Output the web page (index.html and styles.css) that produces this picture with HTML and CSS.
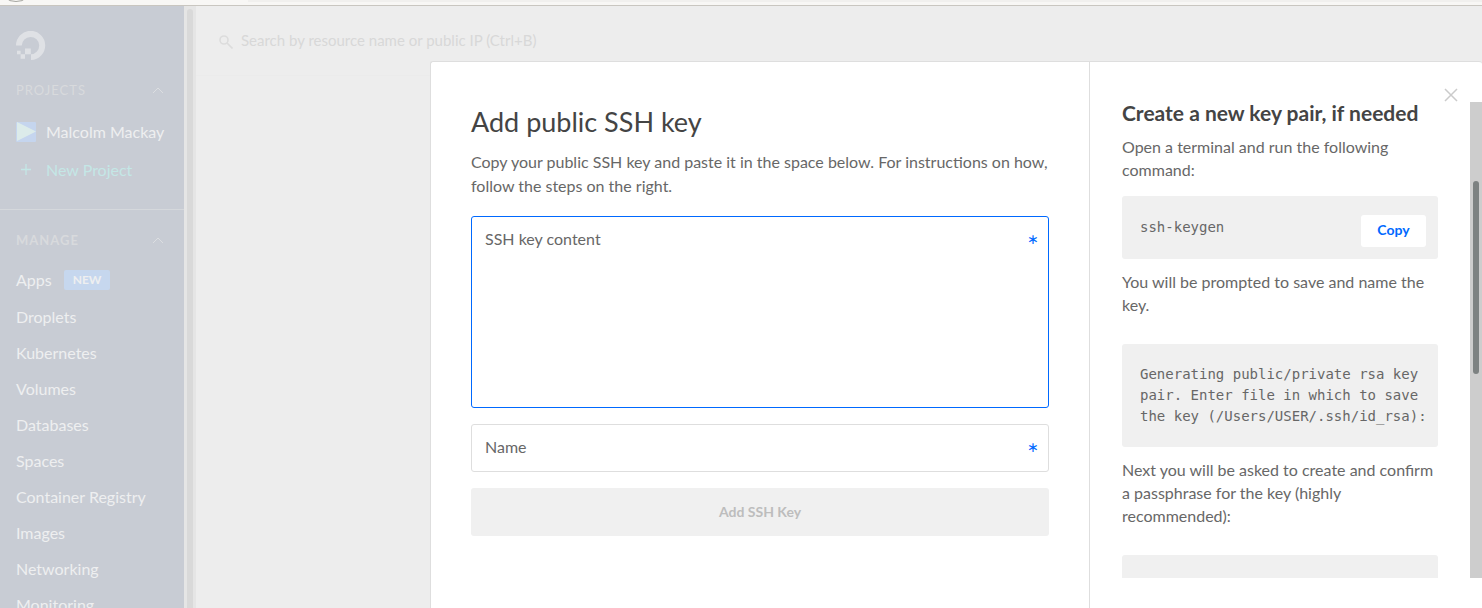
FILE: index.html
```html
<!DOCTYPE html>
<html lang="en">
<head>
<meta charset="utf-8">
<title>Add public SSH key</title>
<link rel="stylesheet" href="styles.css">
</head>
<body>
<div class="chrome"><svg class="chrome-icon" viewBox="0 0 24 5" aria-hidden="true"><path d="M6 -2Q9 1.500 16 1.500T26 -2" fill="none" stroke="#a5a5a0"/></svg><span class="chrome-field"></span></div>
<div class="app">
  <nav class="sidebar">
    <svg class="logo" viewBox="0 0 30 30" aria-hidden="true"><path d="M15 29v-5.700A8.700 8.700 0 1 0 5.800 14.500H0A14.600 14.600 0 1 1 15 29z"/><path d="M9 17.600h5.800v5.700H9zM4.600 23.300H9v4.400H4.600zM1 19.700h3.600v3.600H1z"/></svg>
    <div class="group"><h2>PROJECTS</h2><svg class="chevron" viewBox="0 0 12 8"><path d="M1 7l5-5 5 5"/></svg></div>
    <ul class="projects">
      <li><a href="#"><svg class="tile" viewBox="0 0 20 20"><rect width="20" height="20" rx="1" fill="#c5d5ee"/><path d="M1 0v19l19-9.500z" fill="#dcebea"/></svg>Malcolm Mackay</a></li>
      <li><a class="new" href="#"><svg class="tile" viewBox="0 0 20 20"><path d="M5 9.500h10M10 4v11" stroke="#c4e7e6" stroke-width="1.300"/></svg>New Project</a></li>
    </ul>
    <div class="group manage"><h2>MANAGE</h2><svg class="chevron" viewBox="0 0 12 8"><path d="M1 7l5-5 5 5"/></svg></div>
    <ul class="links">
      <li><a href="#">Apps<span class="badge">NEW</span></a></li>
      <li><a href="#">Droplets</a></li>
      <li><a href="#">Kubernetes</a></li>
      <li><a href="#">Volumes</a></li>
      <li><a href="#">Databases</a></li>
      <li><a href="#">Spaces</a></li>
      <li><a href="#">Container Registry</a></li>
      <li><a href="#">Images</a></li>
      <li><a href="#">Networking</a></li>
      <li><a href="#">Monitoring</a></li>
    </ul>
  </nav>
  <div class="side-track"><div class="side-thumb"></div></div>
  <div class="page">
    <header class="search">
      <svg class="search-icon" viewBox="0 0 14 14"><circle cx="5" cy="5" r="4"/><path d="M8 8l5.500 5.500"/></svg>
      <input type="search" aria-label="Search" placeholder="Search by resource name or public IP (Ctrl+B)">
    </header>
  </div>
  <div class="modal" role="dialog" aria-labelledby="title">
    <form class="form">
      <h1 id="title">Add public SSH key</h1>
      <p>Copy your public SSH key and paste it in the space below. For instructions on how, follow the steps on the right.</p>
      <div class="field">
        <textarea class="active" id="key"></textarea>
        <label for="key">SSH key content<span class="star">∗</span></label>
      </div>
      <div class="field">
        <input type="text" id="name">
        <label for="name">Name<span class="star">∗</span></label>
      </div>
      <button class="submit" type="submit" disabled>Add SSH Key</button>
    </form>
    <aside class="help">
      <button class="close" type="button" aria-label="Close"><svg viewBox="0 0 14 14"><path d="M1 1l12 12M13 1L1 13"/></svg></button>
      <div class="scroll">
        <div class="steps">
          <h2>Create a new key pair, if needed</h2>
          <p class="first">Open a terminal and run the following command:</p>
          <div class="code command"><code>ssh-keygen</code><button class="copy" type="button">Copy</button></div>
          <p>You will be prompted to save and name the key.</p>
          <pre class="code">Generating public/private rsa key
pair. Enter file in which to save
the key (/Users/USER/.ssh/id_rsa):</pre>
          <p>Next you will be asked to create and confirm a passphrase for the key (highly recommended):</p>
          <div class="code"></div>
        </div>
        <div class="track"><div class="thumb"></div></div>
      </div>
    </aside>
  </div>
</div>
</body>
</html>
```
FILE: styles.css
```css
* { box-sizing: border-box; }
body {
  margin: 0;
  height: 100vh;
  display: flex;
  flex-direction: column;
  overflow: hidden;
  background: #ededed;
  color: #676767;
  font: 16px/24px Lato, "Liberation Sans", sans-serif;
}
h1, h2, p, ul, pre { margin: 0; padding: 0; }
ul { list-style: none; }
button, input, textarea { font: inherit; }

.chrome {
  flex: none;
  display: flex;
  gap: 224px;
  height: 6px;
  background: #f8f7f5;
  border-bottom: 1px solid #c9c6c0;
}
.chrome-icon { width: 24px; height: 5px; }
.chrome-field { flex: 1; height: 2px; background: #f1f0ee; }

.app { position: relative; flex: 1; min-height: 0; display: flex; }

.sidebar {
  flex: none;
  width: 184px;
  padding-top: 25px;
  overflow: hidden;
  background: #c8ccd4;
}
.logo { display: block; width: 30px; height: 30px; margin-left: 16px; fill: #dfe1e5; }
.group {
  display: flex;
  align-items: center;
  justify-content: space-between;
  height: 20px;
  margin: 19px 20px 14px 16px;
}
.group h2 { font-size: 13px; line-height: 20px; font-weight: 400; letter-spacing: 1px; color: #d8dadd; }
.chevron { width: 12px; height: 8px; fill: none; stroke: #dcdee1; }
.projects { display: grid; gap: 2px; padding-bottom: 21px; border-bottom: 1px solid #d5d8dc; }
.manage { margin: 20px 20px 12px 16px; }
.manage h2 { font-weight: 700; }
.sidebar a {
  display: flex;
  align-items: center;
  height: 36px;
  padding-left: 16px;
  color: #eeeff0;
  text-decoration: none;
  white-space: nowrap;
}
.sidebar a.new { color: #c4e7e6; }
.tile { width: 20px; height: 20px; margin-right: 10px; }
.links li:first-child { padding-bottom: 1px; }
.badge {
  margin-left: 12px;
  padding: 0 9px;
  border-radius: 2px;
  background: #c6d7ee;
  font-size: 12px;
  line-height: 20px;
  font-weight: 700;
}

.side-track { flex: none; width: 12px; padding: 3px 3px 0; background: #e5e5e5; }
.side-thumb { height: 100%; border-radius: 3px 3px 0 0; background: #d9d9d9; }

.page { flex: 1; }
.search {
  display: flex;
  align-items: center;
  gap: 8px;
  height: 70px;
  padding: 0 0 2px 23px;
  border-bottom: 1px solid #ebebeb;
}
.search-icon { width: 14px; height: 14px; margin-top: 5px; fill: none; stroke: #dcdcdc; stroke-width: 1.6; }
.search input { flex: 1; border: 0; padding: 0; background: none; outline: 0; font-size: 15px; }
.search input::placeholder { color: #d8d8d8; opacity: 1; }

.modal {
  position: absolute;
  inset: 55px 0 0 430px;
  display: flex;
  background: #fff;
  border: 1px solid #dedede;
  border-width: 1px 0 0 1px;
  border-radius: 3px 3px 0 0;
}
.form {
  flex: 1;
  display: flex;
  flex-direction: column;
  gap: 16px;
  padding: 40px;
}
.form h1 { margin-bottom: -8px; font-size: 27px; line-height: 40px; font-weight: 400; color: #444; }
.form p { padding-bottom: 2px; }
.field { position: relative; }
.field input, .field textarea {
  display: block;
  width: 100%;
  height: 48px;
  padding: 12px 32px 12px 14px;
  border: 1px solid #dedede;
  border-radius: 3px;
  background: #fff;
  outline: 0;
  resize: none;
}
.field textarea { height: 192px; }
.field .active { border-color: #0069ff; }
.field label {
  position: absolute;
  inset: 11px 10px auto 14px;
  display: flex;
  justify-content: space-between;
}
.star { color: #0069ff; font-family: "DejaVu Sans", sans-serif; font-size: 14px; }
.submit {
  height: 48px;
  border: 0;
  border-radius: 3px;
  background: #f0f0f0;
  color: #bdbdbd;
  font-size: 14px;
  font-weight: 700;
}

.help {
  position: relative;
  flex: none;
  display: flex;
  width: 393px;
  padding: 40px 0 30px;
  border-left: 1px solid #dedede;
}
.close {
  position: absolute;
  top: 26px;
  right: 24px;
  width: 14px;
  height: 14px;
  padding: 0;
  border: 0;
  background: none;
}
.close svg { display: block; fill: none; stroke: #cbcbcb; stroke-width: 1.5; }
.scroll { flex: 1; display: flex; min-height: 0; overflow: hidden; }
.steps { flex: 1; padding: 0 32px; line-height: 23px; }
.steps h2 { font-size: 21px; line-height: 22px; font-weight: 700; color: #444; white-space: nowrap; }
.steps p { margin: 11px 0 28px; }
.steps .first { margin-bottom: 15px; }
.code {
  min-height: 63px;
  padding: 20px 8px 20px 18px;
  border-radius: 3px;
  background: #f0f0f0;
  font: 14px/21px "DejaVu Sans Mono", monospace;
}
.code code { font: inherit; }
.command { display: flex; align-items: center; justify-content: space-between; padding: 0 12px 0 18px; }
.copy {
  width: 65px;
  height: 32px;
  margin-top: 7px;
  padding: 0 0 2px;
  border: 0;
  border-radius: 3px;
  background: #fff;
  color: #0069ff;
  font: 700 14px/30px Lato, "Liberation Sans", sans-serif;
}
.track { width: 12px; padding: 79px 3px 0; background: #cdcdcd; }
.thumb { height: 193px; border-radius: 3px; background: #7d8282; }
```
